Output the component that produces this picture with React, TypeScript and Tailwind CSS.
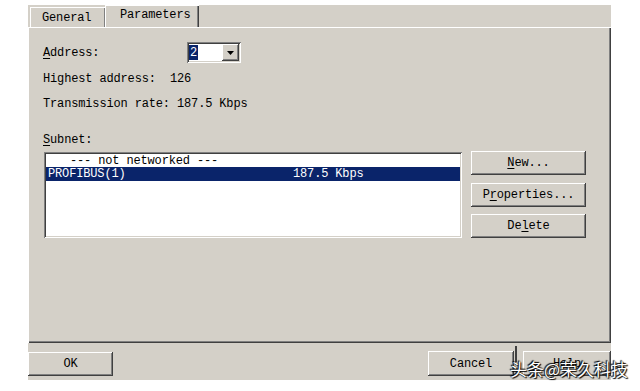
import React from 'react';

const raised =
  'bg-[#d4d0c8] shadow-[inset_-1px_-1px_#404040,inset_1px_1px_#ffffff,inset_-2px_-2px_#808080]';
const sunken =
  'bg-white shadow-[inset_1px_1px_#808080,inset_-1px_-1px_#ffffff,inset_2px_2px_#404040,inset_-2px_-2px_#d4d0c8]';

const mono = { fontFamily: '"Liberation Mono", "Noto Sans CJK SC", monospace' };

const PushButton: React.FC<{ className?: string; children: React.ReactNode }> = ({ className = '', children }) => (
  <div className={`flex items-center justify-center text-black ${raised} ${className}`}>{children}</div>
);

const App: React.FC = () => {
  return (
    <div className="relative w-[640px] h-[391px] bg-white overflow-hidden text-[12px] leading-none text-black tracking-[-0.15px]" style={mono}>
      <div className="ml-[28px] mt-[5px] w-[583px] h-[375px] bg-[#d4d0c8] flex flex-col">
        {/* tabs */}
        <div className="flex h-[22px] items-end pl-[2px]">
          <div className="h-[20px] w-[75px] flex items-center pl-[12px] pt-[2px] shadow-[inset_1px_1px_#ffffff,inset_-1px_0_#808080]">
            General
          </div>
          <div className="h-[22px] w-[94px] flex items-center pl-[15px] pb-[3px] shadow-[inset_1px_1px_#ffffff,inset_-1px_0_#404040,inset_-2px_0_#808080]">
            Parameters
          </div>
        </div>

        {/* panel */}
        <div className="h-[316px] flex flex-col pl-[15px] pt-[15px] shadow-[inset_1px_1px_#ffffff,inset_-1px_-1px_#404040,inset_-2px_-2px_#808080]">
          <div className="flex items-center h-[21px]">
            <div className="w-[144px]">
              <span className="underline underline-offset-2">A</span>ddress:
            </div>
            <div className={`w-[54px] h-[21px] flex items-center pl-[2px] pr-[2px] ${sunken}`}>
              <span className="bg-[#0a246a] text-white px-[1px] h-[15px] flex items-center">2</span>
              <div className="flex-1" />
              <div className={`w-[17px] h-[17px] flex items-center justify-center ${raised}`}>
                <svg width="7" height="4" viewBox="0 0 7 4">
                  <path d="M0 0h7L3.5 4z" fill="#000" />
                </svg>
              </div>
            </div>
          </div>
          <div className="mt-[9px] h-[14px] flex items-center">Highest address:&nbsp;&nbsp;126</div>
          <div className="mt-[11px] h-[14px] flex items-center">Transmission rate: 187.5 Kbps</div>
          <div className="mt-[22px] h-[14px] flex items-center">
            <span className="underline underline-offset-2">S</span>ubnet:
          </div>

          <div className="mt-[4px] flex">
            <div className={`mt-[1px] ml-[1px] w-[418px] h-[86px] p-[2px] ${sunken}`}>
              <div className="h-[13px] flex items-center pl-[24px] whitespace-pre">--- not networked ---</div>
              <div className="h-[14px] flex items-center bg-[#0a246a] text-white pl-[2px]">
                <span className="w-[245px]">PROFIBUS(1)</span>
                <span>187.5 Kbps</span>
              </div>
            </div>
            <div className="ml-[9px] flex flex-col gap-[8px]">
              <PushButton className="w-[115px] h-[24px]">
                <span className="underline underline-offset-2">N</span>ew...
              </PushButton>
              <PushButton className="w-[115px] h-[24px]">
                P<span className="underline underline-offset-2">r</span>operties...
              </PushButton>
              <PushButton className="w-[115px] h-[24px] -mt-[1px]">
                De<span className="underline underline-offset-2">l</span>ete
              </PushButton>
            </div>
          </div>
        </div>

        {/* bottom buttons */}
        <div className="mt-[9px] flex items-start">
          <PushButton className="w-[85px] h-[24px] shadow-[inset_-1px_-1px_#000000,inset_1px_1px_#000000,inset_-2px_-2px_#404040,inset_2px_2px_#ffffff]">
            OK
          </PushButton>
          <div className="flex-1" />
          <PushButton className="w-[86px] h-[25px] -mt-[1px]">Cancel</PushButton>
          <div className="w-[2px] h-[16px] -mt-[6px] ml-[1px] bg-[#404040]" />
          <div className="w-[6px]" />
          <PushButton className="w-[88px] h-[25px] -mt-[1px]">Help</PushButton>
        </div>
      </div>

      {/* watermark overlay */}
      <div
        className="absolute left-[510px] top-[360px] text-[17px] text-white tracking-[0px] [text-shadow:0_0_1px_#000,1px_1px_1px_#000,-1px_-1px_1px_#000]"
        style={{ fontFamily: '"Noto Sans CJK SC", sans-serif' }}
      >
        头条@荣久科技
      </div>
    </div>
  );
};

export default App;
